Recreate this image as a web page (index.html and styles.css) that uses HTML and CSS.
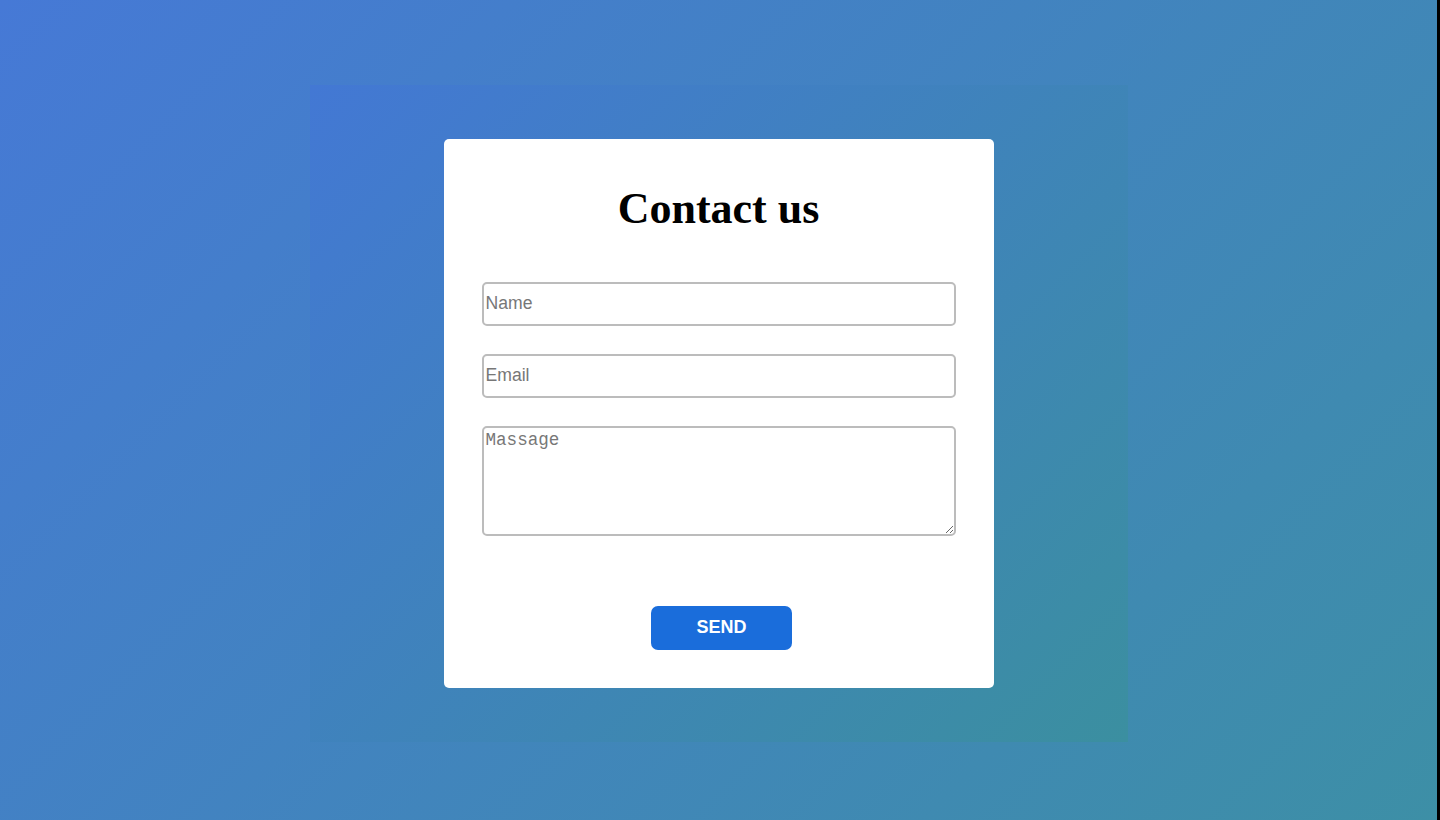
FILE: index.html
```html
<!DOCTYPE html>
<html lang="en">
<head>
<meta charset="utf-8">
<title>Contact us</title>
<link rel="stylesheet" href="styles.css">
</head>
<body>
<main class="stage">
  <section class="frame">
    <div class="card">
      <h1 class="title">Contact us</h1>
      <form class="form">
        <input class="field" type="text" placeholder="Name">
        <input class="field" type="email" placeholder="Email">
        <textarea class="field area" placeholder="Massage"></textarea>
        <button class="send" type="button">SEND</button>
      </form>
    </div>
  </section>
</main>
</body>
</html>
```
FILE: styles.css
```css
html {
  background: #000;
  height: 100%;
}
body {
  margin: 0 3px 0 0;
  height: 100%;
  background: linear-gradient(135deg, #4679d6 0%, #3d8fa6 100%);
  font-family: "Liberation Sans", Arial, sans-serif;
}
.stage {
  height: 100%;
  display: flex;
  align-items: center;
  justify-content: center;
}
.frame {
  padding: 54px 134px;
  background: linear-gradient(135deg, #4378d4 0%, #3b8fa0 100%);
  margin-top: 6px;
}
.card {
  width: 550px;
  height: 549px;
  box-sizing: border-box;
  background: #fff;
  border-radius: 5px;
  padding: 45px 38px 37px;
  display: flex;
  flex-direction: column;
}
.title {
  margin: 0;
  font-family: "Liberation Serif", "Times New Roman", serif;
  font-weight: bold;
  font-size: 44px;
  line-height: 50px;
  text-align: center;
  color: #000;
}
.form {
  margin-top: 48px;
  display: flex;
  flex-direction: column;
  align-items: center;
}
.field {
  box-sizing: border-box;
  width: 100%;
  height: 44px;
  margin: 0 0 28px;
  border: 2px solid #bcbcbc;
  border-radius: 5px;
  padding: 0 2px;
  font-family: "Liberation Sans", Arial, sans-serif;
  font-size: 17.6px;
  color: #222;
  background: #fff;
  outline: none;
}
.field::placeholder {
  color: #777;
}
.area {
  height: 110px;
  margin-bottom: 70px;
  padding: 2px 2px;
  font-family: "Liberation Mono", "Courier New", monospace;
  resize: vertical;
}
.send {
  width: 141px;
  height: 44px;
  margin-left: 6px;
  border: none;
  border-radius: 7px;
  background: #1a6ddb;
  color: #fff;
  font-family: "Liberation Sans", Arial, sans-serif;
  font-weight: bold;
  font-size: 18px;
  cursor: pointer;
}
```
